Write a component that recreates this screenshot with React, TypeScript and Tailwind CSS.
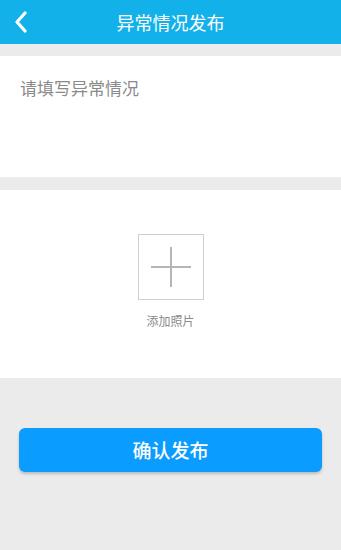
const App = () => {
  return (
    <div
      className="w-[341px] h-[550px] bg-[#ebebeb] flex flex-col"
      style={{ fontFamily: '"Noto Sans CJK SC", "Noto Sans", sans-serif' }}
    >
      {/* header */}
      <header className="h-[44px] bg-[#12b1ea] flex items-center relative">
        <svg width="14" height="22" viewBox="0 0 14 22" className="ml-[14px]">
          <path d="M11 2 L3 11 L11 20" fill="none" stroke="white" strokeWidth="3.2" strokeLinecap="round" strokeLinejoin="round" />
        </svg>
        <div className="flex-1 text-center text-white text-[18px] leading-[44px] mr-[28px]">异常情况发布</div>
      </header>

      {/* description */}
      <div className="mt-[12px] h-[121px] bg-white px-[20px] pt-[20px]">
        <div className="text-[17px] leading-[24px] text-[#8a8a8a]">请填写异常情况</div>
      </div>

      {/* photo */}
      <div className="mt-[13px] h-[188px] bg-white flex flex-col items-center pt-[44px]">
        <div className="w-[66px] h-[66px] border border-[#cfcfcf] flex items-center justify-center">
          <svg width="40" height="40" viewBox="0 0 40 40">
            <rect x="0" y="19" width="40" height="2" fill="#b5b5b5" />
            <rect x="19" y="0" width="2" height="40" fill="#b5b5b5" />
          </svg>
        </div>
        <div className="mt-[12px] text-[12px] leading-[18px] text-[#8a8a8a]">添加照片</div>
      </div>

      {/* submit */}
      <div className="px-[19px] mt-[50px]">
        <button className="w-full h-[44px] rounded-[6px] bg-[#0a9cff] text-white text-[19px] font-medium shadow-[0_2px_3px_rgba(0,0,0,0.2)]">
          确认发布
        </button>
      </div>
    </div>
  );
};

export default App;
